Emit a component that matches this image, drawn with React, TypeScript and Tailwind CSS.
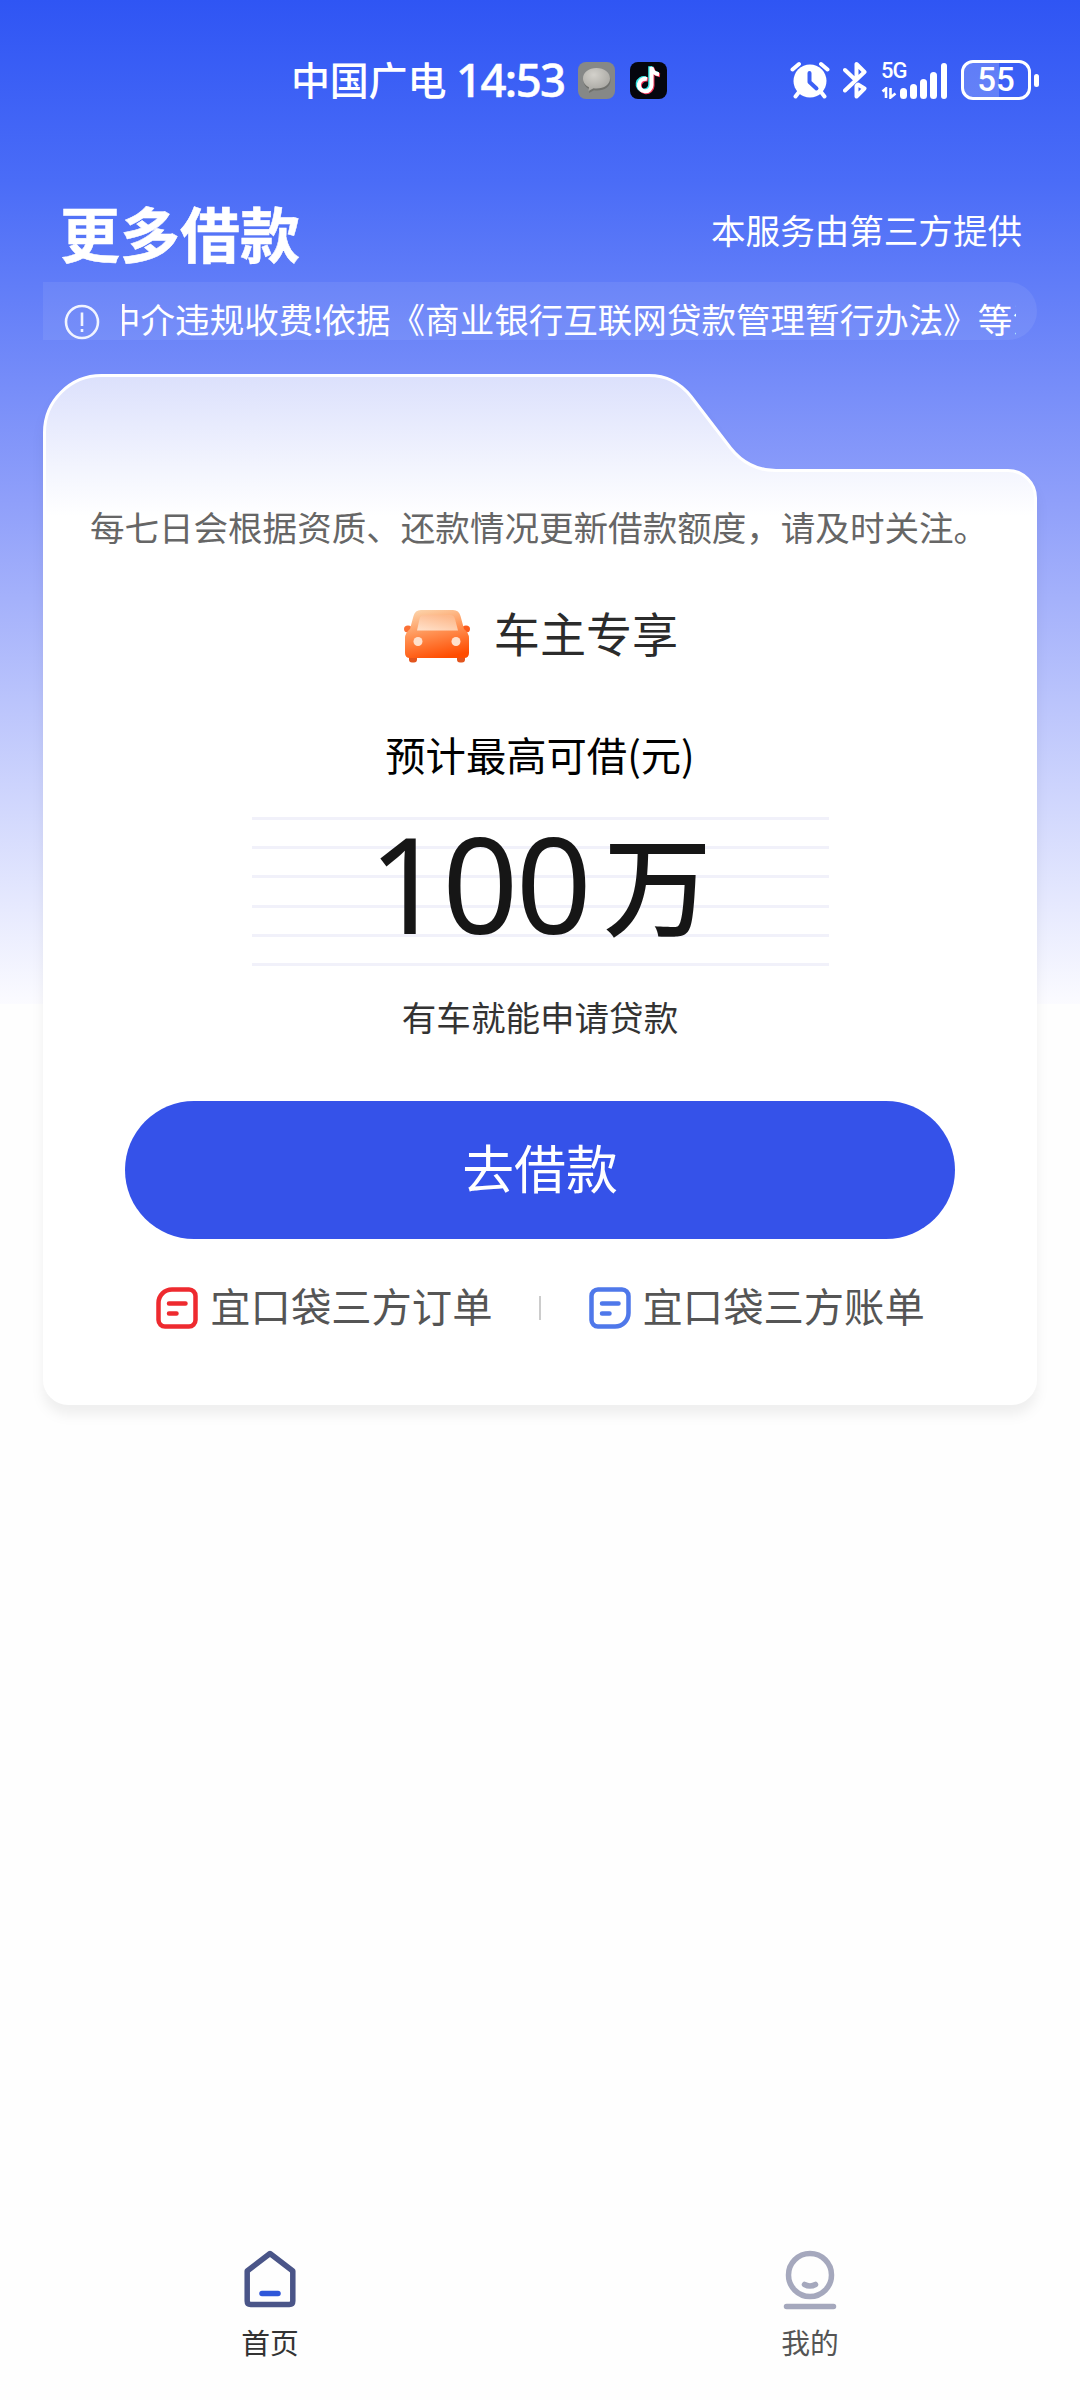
const CJK = "font-['Noto_Sans_CJK_SC',sans-serif]";

function StatusBar() {
  return (
    <div className="flex h-[160px] w-full items-center pl-[291px] pr-[41px] text-white">
      <span className="-mt-[4px] w-[165px] text-[39px] leading-[60px] font-medium tracking-[-0.2px]">中国广电</span>
      <span className="-mt-[2px] w-[122px] text-[45.5px] leading-[60px] font-medium font-['Noto_Sans','Noto_Sans_CJK_SC',sans-serif] tracking-[-1.6px] [-webkit-text-stroke:0.5px_white]">14:53</span>
      <svg className="mr-[15px] size-[37px]" viewBox="0 0 37 37">
        <defs>
          <radialGradient id="bubble" cx="0.4" cy="0.3" r="0.8">
            <stop offset="0" stopColor="#d3d1cb" />
            <stop offset="1" stopColor="#a3a29d" />
          </radialGradient>
        </defs>
        <rect width="37" height="37" rx="8" fill="#868887" />
        <path d="M18.5 7C10.800 7 5 11.500 5 17.500c0 4 2.400 7 6 8.700L10.500 30l5-2.700c1 .2 2 .2 3 .2C26.200 27.500 32 23.500 32 17.500S26.200 7 18.500 7Z" fill="#6f706c" transform="translate(.5 1)" />
        <path d="M18.500 6C10.800 6 5 10.500 5 16.500c0 4 2.400 7 6 8.700L10.500 29l5-2.700c1 .2 2 .2 3 .2C26.200 26.500 32 22.500 32 16.500S26.200 6 18.500 6Z" fill="url(#bubble)" />
      </svg>
      <svg className="size-[37px]" viewBox="0 0 37 37">
        <rect width="37" height="37" rx="8" fill="#05060d" />
        <g fill="none" strokeWidth="4">
          <path d="M17 17a6.300 6.300 0 1 0 4.500 6V5c.5 4 3.500 7 7.500 7.300" stroke="#35e6e4" transform="translate(-1.300 -.8)" />
          <path d="M17 17a6.300 6.300 0 1 0 4.500 6V5c.5 4 3.500 7 7.500 7.300" stroke="#f5385c" transform="translate(1 .9)" />
          <path d="M17 17a6.300 6.300 0 1 0 4.500 6V5c.5 4 3.500 7 7.500 7.300" stroke="#fff" />
        </g>
      </svg>
      <div className="ml-auto flex items-center">
        <svg className="h-[38px] w-[40px]" viewBox="0 0 40 38">
          <circle cx="20" cy="20" r="16.500" fill="#fff" />
          <path d="M2.500 8.500 9 3M37.500 8.500 31 3M9 31l-3.500 4.500M31 31l3.500 4.500" stroke="#fff" strokeWidth="4" strokeLinecap="round" />
          <path d="M19.500 12v9l7 6.500" fill="none" stroke="#3c60f5" strokeWidth="4" strokeLinecap="round" strokeLinejoin="round" />
        </svg>
        <svg className="ml-[13px] h-[38px] w-[24px]" viewBox="0 0 24 38" fill="none" stroke="#fff" strokeWidth="4" strokeLinecap="round" strokeLinejoin="round">
          <path d="M2 9l10 9.500M2 29.500 21.500 11 13.500 3v13" />
          <path d="M15 23.500 21.500 27.500 13.500 35.500V25Z" />
        </svg>
        <div className="ml-[14px] flex h-[38px] w-[66px] items-end">
          <div className="flex h-full w-[19px] flex-col">
            <span className="text-[22px] leading-[20px] font-medium tracking-[-1px] font-['Roboto',sans-serif]">5G</span>
            <svg className="mt-[6px] h-[12px] w-[16px]" viewBox="0 0 16 12">
              <path d="M1.500 4.500 5 1.500V11M9.500 1v9.500L14.500 6.500" fill="none" stroke="#fff" strokeWidth="2.600" />
            </svg>
          </div>
          <div className="flex flex-1 items-end justify-between">
            <i className="h-[11px] w-[6.5px] rounded-full bg-white" />
            <i className="h-[15px] w-[6.5px] rounded-full bg-white" />
            <i className="h-[20px] w-[6.5px] rounded-full bg-white" />
            <i className="h-[27px] w-[6.5px] rounded-full bg-white" />
            <i className="h-[36px] w-[6.5px] rounded-full bg-white" />
          </div>
        </div>
        <div className="ml-[14px] flex h-[40px] w-[70px] items-center justify-center rounded-[12px] border-[3px] border-white bg-gradient-to-r from-white/20 from-55% to-transparent to-55%">
          <span className="text-[33px] leading-[34px] font-medium font-['Roboto',sans-serif]">55</span>
        </div>
        <i className="ml-[3px] h-[13px] w-[5px] rounded-full bg-white" />
      </div>
    </div>
  );
}

function CardShape() {
  return (
    <svg className="absolute inset-0 h-[1031px] w-[994px] drop-shadow-[0_10px_6px_rgba(0,0,0,0.06)]" viewBox="0 0 994 1031">
      <defs>
        <linearGradient id="card" gradientUnits="userSpaceOnUse" x1="0" y1="0" x2="0" y2="142">
          <stop offset="0" stopColor="#dbe0fc" />
          <stop offset="1" stopColor="#ffffff" />
        </linearGradient>
      </defs>
      <path
        d="M1.500 58.500a57 57 0 0 1 57-57H606C624 1.500 637 8.500 648 22.500L687.500 74C699 88.500 713 96.500 733 96.500H965a27.500 27.500 0 0 1 27.500 27.500V1005.500a24 24 0 0 1-24 24H25.500a24 24 0 0 1-24-24Z"
        fill="url(#card)"
        stroke="#fff"
        strokeWidth="3"
      />
    </svg>
  );
}

function CarIcon() {
  return (
    <svg className="h-[54px] w-[68px]" viewBox="0 0 68 54">
      <defs>
        <linearGradient id="car" x1="0.3" y1="0" x2="0.6" y2="1">
          <stop offset="0" stopColor="#fcd0a6" />
          <stop offset="0.45" stopColor="#ff9355" />
          <stop offset="1" stopColor="#ff4c00" />
        </linearGradient>
        <linearGradient id="glass" x1="0" y1="1" x2="0.6" y2="0">
          <stop offset="0" stopColor="#ffe2cc" />
          <stop offset="1" stopColor="#fdb98c" />
        </linearGradient>
      </defs>
      <path d="M6 46h8v4.500q0 3-3 3H9q-3 0-3-3ZM54 46h8v4.500q0 3-3 3h-2q-3 0-3-3Z" fill="#e2541d" />
      <ellipse cx="5" cy="20" rx="4" ry="3.500" fill="#fb7034" />
      <ellipse cx="63" cy="20" rx="4" ry="3.500" fill="#fb5a1c" />
      <path d="M18 1H50q6 0 7.500 6L61 20q5 4 5 9V44q0 5-5 5H7q-5 0-5-5V29q0-5 5-9L10.500 7Q12 1 18 1Z" fill="url(#car)" />
      <path d="M21 6H47q4 0 5 4l3 11.500H14L16.500 10Q17.500 6 21 6Z" fill="url(#glass)" />
      <circle cx="15" cy="32.500" r="4.500" fill="#ffe0cc" />
      <circle cx="53" cy="32.500" r="4.500" fill="#ffe0cc" />
    </svg>
  );
}

function OrderIcon() {
  return (
    <svg className="size-[42px]" viewBox="0 0 42 42" fill="none" stroke="#ee2a2f" strokeLinecap="round" strokeWidth="4.500">
      <path d="M16 2.500H33A6.500 6.500 0 0 1 39.500 9V33A6.500 6.500 0 0 1 33 39.500H9A6.500 6.500 0 0 1 2.500 33V16A13.500 13.500 0 0 1 16 2.500Z" />
      <path d="M13 16.500H29.500M13 26.500h7.500" />
    </svg>
  );
}

function BillIcon() {
  return (
    <svg className="size-[42px]" viewBox="0 0 42 42" fill="none" stroke="#4f78ea" strokeLinecap="round" strokeWidth="4.500">
      <path d="M9 2.500H33A6.500 6.500 0 0 1 39.500 9V26A13.500 13.500 0 0 1 26 39.500H9A6.500 6.500 0 0 1 2.500 33V9A6.500 6.500 0 0 1 9 2.500Z" />
      <path d="M13 16.500H29.500M13 26.500h7.500" />
    </svg>
  );
}

function LoanCard() {
  return (
    <section className="relative mt-[34px] ml-[43px] h-[1031px] w-[994px]">
      <CardShape />
      <div className="relative flex flex-col items-center pt-[126px]">
        <p className="-ml-[2px] text-[34.56px] leading-[52px] whitespace-nowrap text-[#666]">每七日会根据资质、还款情况更新借款额度，请及时关注。</p>
        <div className="mt-[50px] ml-[1px] flex h-[68px] items-center gap-[23px]">
          <CarIcon />
          <h2 className="-mt-[8px] text-[46.080px] leading-[68px] text-[#2b2b2b]">车主专享</h2>
        </div>
        <p className="mt-[54px] text-[40.32px] leading-[60px] text-black">预计最高可借(元)</p>
        <div className="relative mt-[33px] flex h-[149px] w-[577px] flex-col justify-between">
          <i className="h-[3px] bg-[#f1f1fa]" />
          <i className="h-[3px] bg-[#f1f1fa]" />
          <i className="h-[3px] bg-[#f1f1fa]" />
          <i className="h-[3px] bg-[#f1f1fa]" />
          <i className="h-[3px] bg-[#f1f1fa]" />
          <i className="h-[3px] bg-[#f1f1fa]" />
          <div className="absolute inset-x-0 -top-[9px] flex items-baseline pl-[117px] leading-[149px] whitespace-nowrap text-[#161616]">
            <span className="text-[133px] tracking-[-2.4px] font-['Noto_Sans',sans-serif]">100</span>
            <span className="relative -top-[6px] ml-[14px] text-[108px] font-medium">万</span>
          </div>
        </div>
        <p className="mt-[24px] text-[34.56px] leading-[52px] text-[#333]">有车就能申请贷款</p>
        <button className="mt-[59px] h-[138px] w-[830px] rounded-full bg-[#3552e9] pb-[7px] text-[51.84px] leading-[131px] text-white">去借款</button>
        <div className="mt-[39px] ml-[1px] flex h-[60px] items-center text-[40.32px] leading-[60px] text-[#555]">
          <OrderIcon />
          <span className="-mt-[6px] ml-[12px]">宜口袋三方订单</span>
          <i className="mr-[48px] ml-[46px] h-[24px] w-[2px] bg-[#ccc]" />
          <BillIcon />
          <span className="-mt-[6px] ml-[12px]">宜口袋三方账单</span>
        </div>
      </div>
    </section>
  );
}

function TabBar() {
  return (
    <nav className="mt-auto flex h-[160px] text-[28.8px] leading-[42px]">
      <div className="flex flex-1 flex-col items-center pt-[8px] text-[#333]">
        <svg className="h-[62px] w-[56px]" viewBox="0 0 56 62" fill="none" strokeLinecap="round" strokeLinejoin="round">
          <path d="M28 5.500 50.800 23V53q0 3.500-3.500 3.500H8.700Q5.200 56.500 5.200 53V23Z" stroke="#4a5588" strokeWidth="5.500" />
          <path d="M20 45.500H36" stroke="#2f57d9" strokeWidth="5.500" />
        </svg>
        <span className="mt-[11px]">首页</span>
      </div>
      <div className="flex flex-1 flex-col items-center pt-[8px] text-[#555]">
        <svg className="h-[62px] w-[56px]" viewBox="0 0 56 62" fill="none" stroke="#a5a8bd" strokeLinecap="round" strokeWidth="5.500">
          <circle cx="28" cy="27" r="21.500" />
          <path d="M22.500 36.500q5.500 3 11 0M4.500 58.500H51.500" />
        </svg>
        <span className="mt-[11px]">我的</span>
      </div>
    </nav>
  );
}

export default function App() {
  return (
    <main className={`${CJK} flex h-[2400px] w-[1080px] flex-col overflow-hidden bg-[#fefefe] bg-[linear-gradient(180deg,#2f55f4_0px,#4a6cf7_180px,#8f9ffa_500px,#fbfbff_1004px,#fefefe_1004px)]`}>
      <StatusBar />
      <header className="flex h-[122px] items-center justify-between pr-[58px] pl-[60px] text-white">
        <h1 className="mt-[21px] text-[60px] leading-[80px] font-bold [-webkit-text-stroke:0.5px_white]">更多借款</h1>
        <span className="mt-[16px] text-[34.56px] leading-[52px]">本服务由第三方提供</span>
      </header>
      <div className="ml-[43px] flex h-[58px] w-[994px] shrink-0 items-center rounded-r-full bg-white/7 pl-[21px]">
        <svg className="mt-[22px] size-[36px] self-start" viewBox="0 0 36 36" fill="none" stroke="#fff" strokeOpacity="0.9" strokeWidth="2.600">
          <circle cx="18" cy="18" r="16" />
          <path d="M18 8.500V22M18 25v3" />
        </svg>
        <div className="ml-[22px] w-[894px] overflow-hidden">
          <p className="-ml-[16px] pt-[16px] pb-[2px] text-[34.56px] leading-[40px] whitespace-nowrap text-white">
            中介违规收费<span className="-mr-[2px] -ml-[1px]">!</span>依据《商业银行互联网贷款管理暂行办法》等法
          </p>
        </div>
      </div>
      <LoanCard />
      <TabBar />
    </main>
  );
}
